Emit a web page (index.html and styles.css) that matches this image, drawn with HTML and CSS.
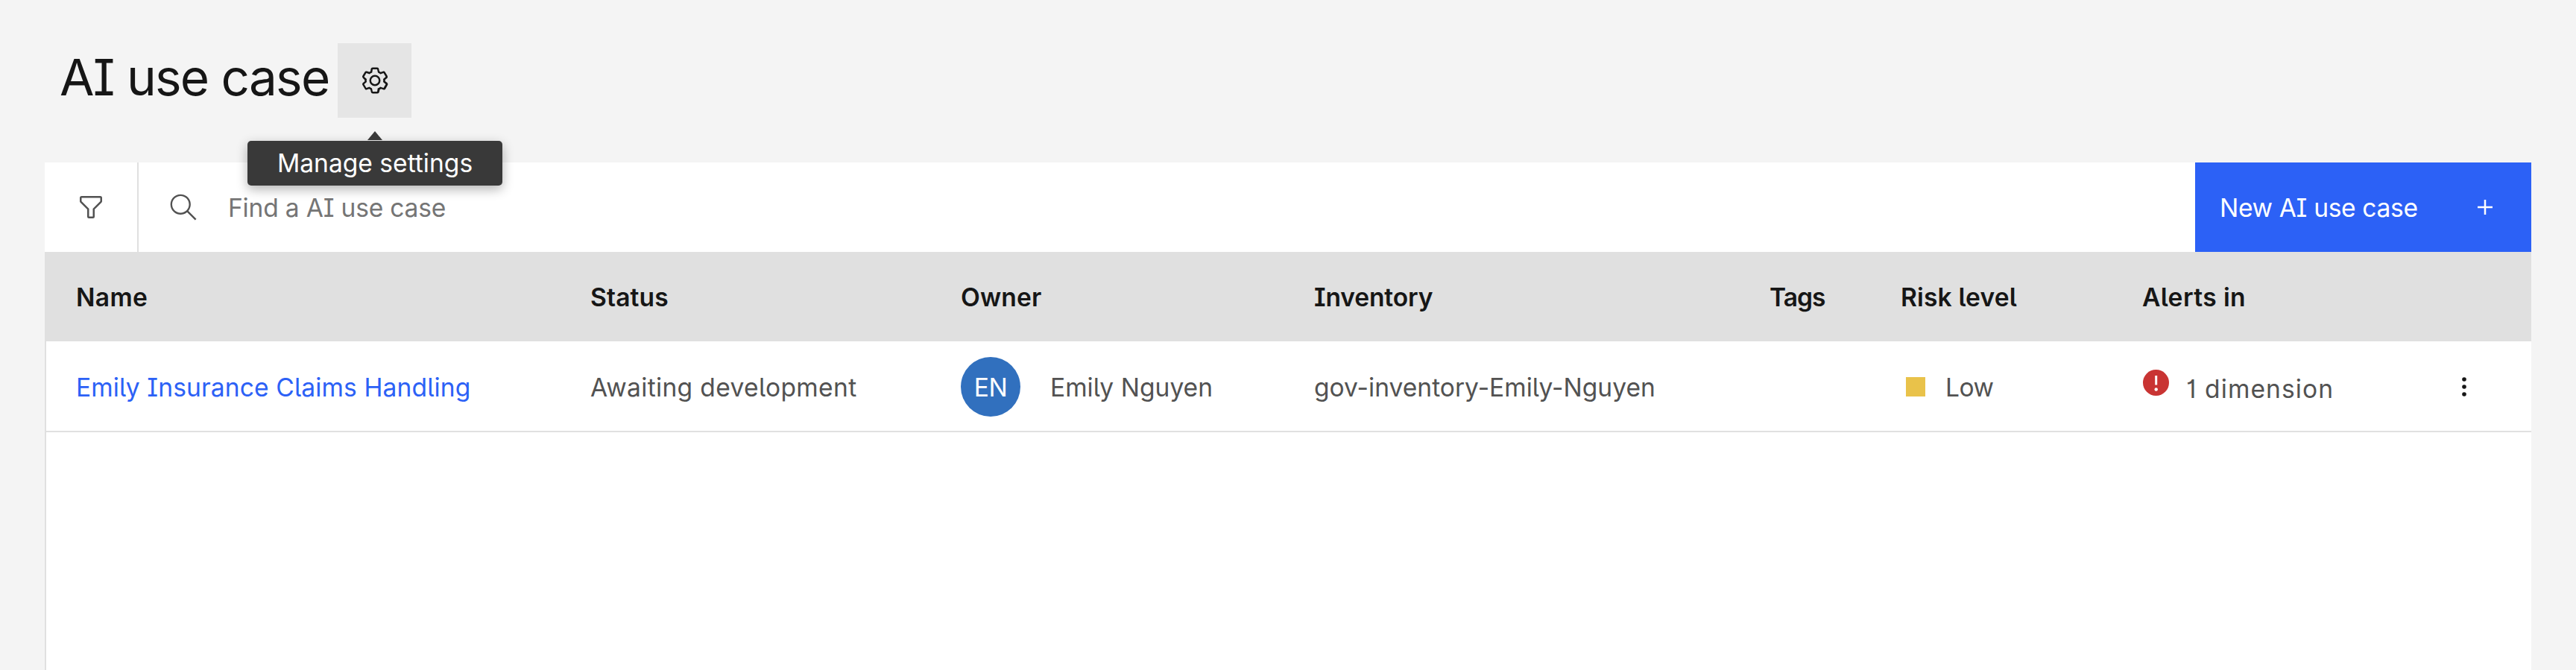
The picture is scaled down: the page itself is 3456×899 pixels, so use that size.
FILE: index.html
```html
<!DOCTYPE html>
<html lang="en">
<head>
<meta charset="utf-8">
<title>AI use case</title>
<link rel="stylesheet" href="styles.css">
</head>
<body>
<main class="page">
  <header class="page-header">
    <h1 class="title">AI use case</h1>
    <button class="settings" aria-label="Manage settings">
      <svg class="icon-gear" viewBox="0 0 16 16" fill="currentColor"><path d="M13.5,8.4c0-0.1,0-0.3,0-0.4c0-0.1,0-0.3,0-0.4l1-0.8c0.4-0.3,0.4-0.9,0.2-1.3l-1.2-2C13.3,3.2,13,3,12.6,3c-0.1,0-0.2,0-0.3,0.1l-1.2,0.4c-0.2-0.1-0.4-0.3-0.7-0.4l-0.3-1.3C10.1,1.3,9.7,1,9.2,1H6.8c-0.5,0-0.9,0.3-1,0.8L5.6,3.1C5.3,3.2,5.1,3.3,4.9,3.4L3.7,3C3.6,3,3.5,3,3.4,3C3,3,2.7,3.2,2.5,3.5l-1.2,2C1.1,5.9,1.2,6.4,1.6,6.8l0.9,0.9c0,0.1,0,0.3,0,0.4c0,0.1,0,0.3,0,0.4L1.6,9.2c-0.4,0.3-0.5,0.9-0.2,1.3l1.2,2C2.7,12.8,3,13,3.4,13c0.1,0,0.2,0,0.3-0.1l1.2-0.4c0.2,0.1,0.4,0.3,0.7,0.4l0.3,1.3c0.1,0.5,0.5,0.8,1,0.8h2.4c0.5,0,0.9-0.3,1-0.8l0.3-1.3c0.2-0.1,0.4-0.2,0.7-0.4l1.2,0.4c0.1,0,0.2,0.1,0.3,0.1c0.4,0,0.7-0.2,0.9-0.5l1.1-2c0.2-0.4,0.2-0.9-0.2-1.3L13.5,8.4z M12.6,12l-1.7-0.6c-0.4,0.3-0.9,0.6-1.4,0.8L9.2,14H6.8l-0.4-1.8c-0.5-0.2-0.9-0.5-1.4-0.8L3.4,12l-1.2-2l1.4-1.2c-0.1-0.5-0.1-1.1,0-1.6L2.2,6l1.2-2l1.7,0.6C5.5,4.2,6,4,6.5,3.8L6.8,2h2.4l0.4,1.8c0.5,0.2,0.9,0.5,1.4,0.8L12.6,4l1.2,2l-1.4,1.2c0.1,0.5,0.1,1.1,0,1.6l1.4,1.2L12.6,12z"/><circle cx="8" cy="8" r="2.500" fill="none" stroke="currentColor"/></svg>
      <span class="tooltip">Manage settings</span>
    </button>
  </header>
  <section class="table">
    <div class="toolbar">
      <button class="filter" aria-label="Filter"><svg class="icon" viewBox="0 0 32 32"><path fill="currentColor" d="M18,28H14a2,2,0,0,1-2-2V18.410L4.590,11A2,2,0,0,1,4,9.590V6A2,2,0,0,1,6,4H26a2,2,0,0,1,2,2V9.590A2,2,0,0,1,27.410,11L20,18.410V26A2,2,0,0,1,18,28ZM6,6V9.590l8,8V26h4V17.590l8-8V6Z"/></svg></button>
      <div class="search"><svg class="icon" viewBox="0 0 16 16"><path fill="currentColor" d="M15,14.300L10.700,10c1.900-2.300,1.600-5.800-0.700-7.700S4.200,0.700,2.300,3S0.700,8.800,3,10.700c2,1.700,5,1.700,7,0l4.300,4.300L15,14.300z M2,6.500C2,4,4,2,6.500,2S11,4,11,6.500S9,11,6.500,11S2,9,2,6.500z"/></svg><span class="placeholder">Find a AI use case</span></div>
      <button class="create"><span class="create-label">New AI use case</span><svg class="icon" viewBox="0 0 32 32"><path fill="currentColor" d="M17 15V8h-2v7H8v2h7v7h2v-7h7v-2z"/></svg></button>
    </div>
    <div class="row head">
      <span class="cell col-name">Name</span><span class="cell">Status</span><span class="cell">Owner</span><span class="cell col-inventory">Inventory</span><span class="cell col-tags">Tags</span><span class="cell">Risk level</span><span class="cell col-alerts">Alerts in</span>
    </div>
    <div class="row body">
      <a class="cell link">Emily Insurance Claims Handling</a>
      <span class="cell status">Awaiting development</span>
      <span class="cell owner"><span class="avatar">EN</span><span>Emily Nguyen</span></span>
      <span class="cell inventory">gov-inventory-Emily-Nguyen</span>
      <span class="cell"></span>
      <span class="cell risk"><i class="swatch"></i><span>Low</span></span>
      <span class="cell alerts"><svg class="alert-icon" viewBox="0 0 35 35"><circle cx="17.500" cy="17.500" r="17.500" fill="#c93433"/><path d="M16.200 8h3v12.500h-3z" fill="#fff"/><circle cx="17.700" cy="26.500" r="2.200" fill="#fff"/></svg><span class="dimension">1 dimension</span></span>
      <span class="cell"><svg class="dots" viewBox="0 0 8 28" fill="#161616"><circle cx="4" cy="4" r="2.800"/><circle cx="4" cy="14" r="2.800"/><circle cx="4" cy="24" r="2.800"/></svg></span>
    </div>
    <div class="empty"></div>
  </section>
</main>
</body>
</html>
```
FILE: styles.css
```css
*{box-sizing:border-box}
body{margin:0;background:#f4f4f4;color:#525252;font-family:Inter,"Open Sans",sans-serif;font-size:33.6px;line-height:40px;font-feature-settings:"cv08","cv05","cv01"}
button{border:0;background:none;padding:0;font:inherit;color:inherit;font-feature-settings:inherit}
svg{display:block;flex:none}
.page{height:899px;padding:58px 60px 0;overflow:hidden}
.page-header{display:flex;height:160px;padding-left:20px;white-space:nowrap}
.title{margin:0;width:373px;color:#161616;font-weight:400;font-size:67.4px;line-height:92px;letter-spacing:-1.75px}
.settings{position:relative;display:flex;align-items:center;justify-content:center;width:99px;height:100px;background:#e5e5e5;color:#161616}
.icon-gear{width:40px;height:40px}
.tooltip{position:absolute;left:-121px;top:131px;width:342px;height:60px;line-height:60px;border-radius:5px;background:#393939;color:#fff;box-shadow:0 5px 15px rgba(0,0,0,.3);text-align:center}
.tooltip::before{content:"";position:absolute;left:161px;top:-13px;border:10px solid transparent;border-top:0;border-bottom:12px solid #393939}
.table{display:flex;flex-direction:column;height:681px;background:#fff}
.toolbar{display:flex;height:120px}
.filter{display:flex;align-items:center;justify-content:center;width:126px;border-right:2px solid #e0e0e0}
.icon{width:40px;height:40px}
.search{display:flex;align-items:center;flex:1;padding-left:40px;gap:40px}
.placeholder{color:#757575;letter-spacing:-.2px;padding-top:1px}
.create{display:flex;align-items:center;justify-content:space-between;width:451px;padding:0 42px 0 33px;background:#2c61f6;color:#fff}
.create-label{letter-spacing:-.35px;padding-top:1px}
.row{display:grid;grid-template-columns:690px 497px 474px 611px 176px 324px 430px 1fr;height:120px;align-items:center;padding-left:42px;white-space:nowrap}
.head{background:#e0e0e0;color:#161616;font-weight:600;letter-spacing:.15px;padding-top:2px}
.col-name{letter-spacing:.3px}
.col-inventory{letter-spacing:-.15px}
.col-tags{letter-spacing:-1px}
.col-alerts{letter-spacing:.4px}
.body{height:122px;border-bottom:2px solid #e0e0e0;border-left:2px solid #e0e0e0;padding:2px 0 0 40px;letter-spacing:0}
.link{color:#2c61f6;letter-spacing:.12px}
.link,.status,.inventory{padding-top:2px}
.status{letter-spacing:.33px}
.owner,.risk,.alerts{display:flex;align-items:center}
.owner span:last-child,.risk span{padding-top:2px}
.risk span{letter-spacing:-.5px}
.avatar{width:80px;height:80px;border-radius:50%;background:#3170be;color:#fff;line-height:82px;text-align:center;margin-right:40px;letter-spacing:-.5px}
.swatch{width:26px;height:26px;margin:0 27px 0 7px;background:#e9c24a}
.alert-icon{width:35px;height:35px;margin:0 23px 11px 1px}
.dimension{letter-spacing:1.1px;padding-top:5px}
.dots{width:8px;height:28px;margin-left:-2px}
.empty{flex:1;border-left:2px solid #e0e0e0}
```
